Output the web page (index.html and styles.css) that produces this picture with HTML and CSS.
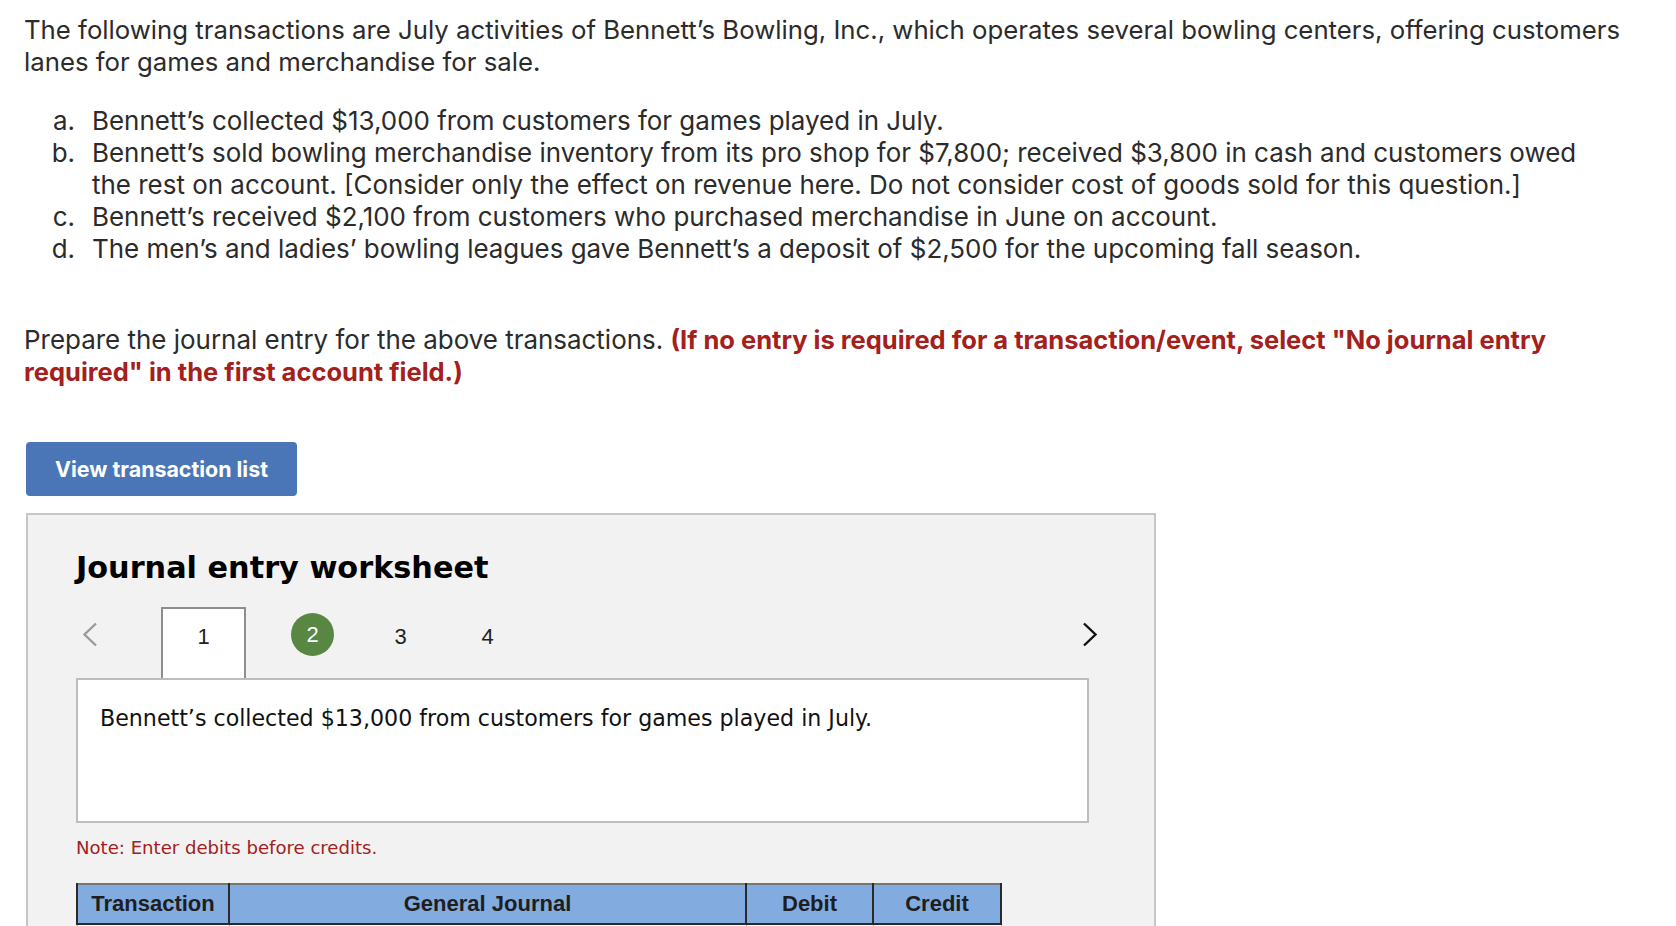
FILE: index.html
```html
<!DOCTYPE html>
<html lang="en">
<head>
<meta charset="utf-8">
<title>Journal entry worksheet</title>
<link rel="stylesheet" href="styles.css">
</head>
<body>
<div class="page">
  <p class="intro">The following transactions are July activities of Bennett’s Bowling, Inc., which operates several bowling centers, offering customers lanes for games and merchandise for sale.</p>
  <ol class="items">
    <li><span class="mk">a.</span><span class="tx">Bennett’s collected $13,000 from customers for games played in July.</span></li>
    <li><span class="mk">b.</span><span class="tx">Bennett’s sold bowling merchandise inventory from its pro shop for $7,800; received $3,800 in cash and customers owed the rest on account. [Consider only the effect on revenue here. Do not consider cost of goods sold for this question.]</span></li>
    <li><span class="mk">c.</span><span class="tx">Bennett’s received $2,100 from customers who purchased merchandise in June on account.</span></li>
    <li><span class="mk">d.</span><span class="tx">The men’s and ladies’ bowling leagues gave Bennett’s a deposit of $2,500 for the upcoming fall season.</span></li>
  </ol>
  <p class="prompt">Prepare the journal entry for the above transactions. <strong class="warn">(If no entry is required for a transaction/event, select "No journal entry required" in the first account field.)</strong></p>
  <button class="btn" type="button">View transaction list</button>
  <section class="ws">
    <h2 class="ws-title">Journal entry worksheet</h2>
    <div class="tabs">
      <span class="nav prev"><svg width="16" height="25" viewBox="0 0 16 25"><path d="M14 1.5 L2.5 12.5 L14 23.5" fill="none" stroke="#9a9a9a" stroke-width="2.4"/></svg></span>
      <span class="tab tab-active">1</span>
      <span class="tab-done"><span class="dot">2</span></span>
      <span class="tab">3</span>
      <span class="tab">4</span>
      <span class="nav next"><svg width="16" height="25" viewBox="0 0 16 25"><path d="M2 1.5 L13.5 12.5 L2 23.5" fill="none" stroke="#111" stroke-width="2.4"/></svg></span>
    </div>
    <div class="desc">Bennett’s collected $13,000 from customers for games played in July.</div>
    <p class="note">Note: Enter debits before credits.</p>
    <table class="jt">
      <colgroup>
        <col class="c1"><col class="c2"><col class="c3"><col class="c4">
      </colgroup>
      <thead>
        <tr><th>Transaction</th><th>General Journal</th><th>Debit</th><th>Credit</th></tr>
      </thead>
      <tbody>
        <tr><td>1</td><td></td><td></td><td></td></tr>
      </tbody>
    </table>
  </section>
</div>
</body>
</html>
```

FILE: styles.css
```css
body {
  margin: 0;
  background: #fff;
  color: #2b2b2b;
  font-family: "Inter", "Liberation Sans", sans-serif;
}
.page {
  padding-left: 24px;
}
.intro {
  margin: 14px 0 0;
  width: 1620px;
  font-size: 25.75px;
  line-height: 32px;
}
.items {
  margin: 27px 0 0;
  padding: 0;
  list-style: none;
  width: 1575px;
  font-size: 25.95px;
  line-height: 32px;
}
.items li {
  display: flex;
}
.mk {
  flex: 0 0 51px;
  text-align: right;
  margin-right: 17px;
}
.tx {
  flex: 1;
}
.prompt {
  margin: 59px 0 0;
  width: 1620px;
  font-size: 25.95px;
  line-height: 32px;
}
.warn {
  color: #a3201c;
  font-weight: 700;
  font-size: 25.5px;
}
.btn {
  display: block;
  margin: 54px 0 0 2px;
  width: 271px;
  height: 54px;
  border: 0;
  border-radius: 4px;
  background: #4a76b7;
  color: #fff;
  font-family: inherit;
  font-weight: 700;
  font-size: 21.4px;
}
.ws {
  margin: 17px 0 0 2px;
  width: 1130px;
  height: 500px;
  box-sizing: border-box;
  border: 2px solid #c6c6c6;
  background: #f2f2f2;
  padding-left: 48px;
}
.ws-title {
  margin: 35px 0 0;
  font-family: "DejaVu Sans", sans-serif;
  font-weight: 700;
  font-size: 30.3px;
  line-height: 36px;
  color: #000;
}
.tabs {
  margin-top: 21px;
  display: flex;
  width: 1022px;
  height: 71px;
  font-family: "Liberation Sans", sans-serif;
  font-size: 22px;
  line-height: 24px;
  color: #222;
}
.nav {
  padding-top: 15px;
}
.prev {
  width: 79px;
  padding-left: 6px;
}
.next {
  margin-left: auto;
}
.tab {
  width: 87px;
  box-sizing: border-box;
  padding-top: 18px;
  text-align: center;
}
.tab-active {
  width: 85px;
  border: 2px solid #8e8e8e;
  border-bottom: 0;
  background: #fff;
  padding-top: 16px;
}
.tab-done {
  margin: 6px 23px 0 45px;
}
.dot {
  display: flex;
  align-items: center;
  justify-content: center;
  width: 43px;
  height: 43px;
  border-radius: 50%;
  background: #588744;
  color: #fff;
}
.desc {
  width: 1013px;
  height: 145px;
  box-sizing: border-box;
  border: 2px solid #bdbdbd;
  background: #fff;
  padding: 25px 22px 0;
  font-family: "DejaVu Sans", sans-serif;
  font-size: 22.15px;
  line-height: 26px;
  color: #111;
}
.note {
  margin: 14px 0 0;
  font-family: "DejaVu Sans", sans-serif;
  font-size: 18.1px;
  line-height: 22px;
  color: #a3201c;
}
.jt {
  margin-top: 24px;
  width: 924px;
  table-layout: fixed;
  border-collapse: collapse;
  border-top: 2px solid #777;
  font-family: "Liberation Sans", sans-serif;
}
.jt th {
  height: 38px;
  padding: 0;
  background: #82abe0;
  border: 2px solid #2a2a2a;
  border-top: 0;
  font-size: 22px;
  font-weight: 700;
  color: #1e1e1e;
}
.c1 { width: 152px; }
.c2 { width: 517px; }
.c3 { width: 127px; }
.c4 { width: 128px; }
.jt td {
  height: 40px;
  border: 1px solid #aaa;
  background: #fff;
}
```
